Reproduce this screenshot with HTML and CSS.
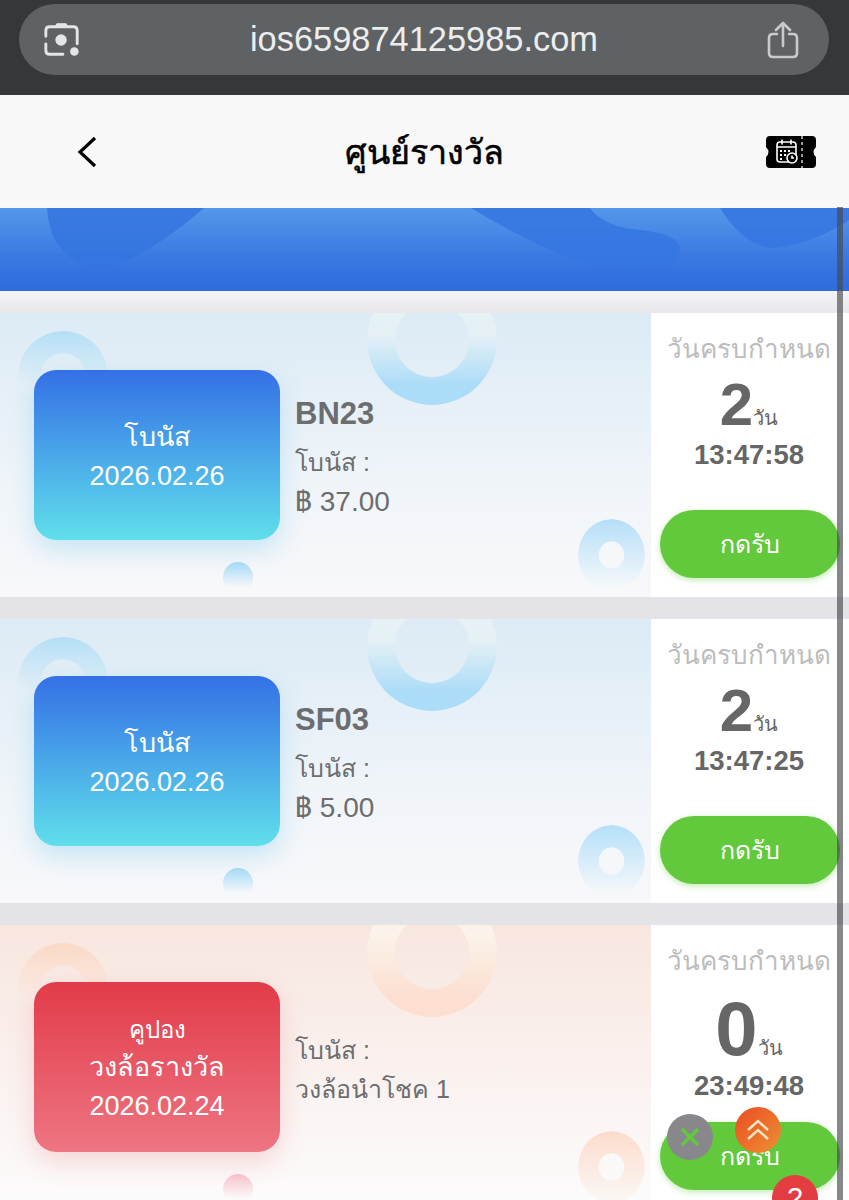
FILE: index.html
```html
<!DOCTYPE html>
<html lang="th">

<head>
    <meta charset="UTF-8">
    <meta name="viewport" content="width=device-width, initial-scale=1.0">
    <title>ศูนย์รางวัล</title>
    <link rel="stylesheet" href="styles.css">
</head>

<body>
    <div class="browser-bar">
        <div class="url-pill">
            <svg class="url-icon" viewBox="0 0 40 40" fill="none" stroke="#e4e5e7" stroke-width="3" stroke-linecap="round">
                <path d="M13 6l2-3h9l2 3z" fill="#e4e5e7" stroke-width="1.5"/>
                <path d="M3 16v-6q0-4 4-4h25q4 0 4 4v14"/>
                <path d="M3 24v7q0 4 4 4h14"/>
                <circle cx="19" cy="20" r="6" fill="#e4e5e7" stroke="none"/>
                <circle cx="33" cy="32" r="4.500" fill="#e4e5e7" stroke="none"/>
            </svg>
            <span class="url-text">ios659874125985.com</span>
            <svg class="share-icon" viewBox="0 0 32 38" fill="none" stroke="#c9cacc" stroke-width="2.600" stroke-linecap="round" stroke-linejoin="round">
                <path d="M10 13H6q-4 0-4 4v15q0 4 4 4h20q4 0 4-4V17q0-4-4-4h-4"/>
                <path d="M16 25V2M9 9l7-7 7 7"/>
            </svg>
        </div>
    </div>

    <header class="page-header">
        <svg class="back-icon" viewBox="0 0 20 32" fill="none" stroke="#000" stroke-width="3.200">
            <path d="M18 2L3 16l15 14"/>
        </svg>
        <h1>ศูนย์รางวัล</h1>
        <svg class="ticket-icon" viewBox="0 0 50 32">
            <path d="M4 0h42q4 0 4 4v7q-5 5 0 10v7q0 4-4 4H4q-4 0-4-4v-7q5-5 0-10V4q0-4 4-4z" fill="#000"/>
            <path d="M36 0v32" stroke="#fff" stroke-width="1.200" stroke-dasharray="3 3"/>
            <g fill="none" stroke="#fff" stroke-width="1.600">
                <rect x="11" y="6" width="19" height="20" rx="3"/>
                <path d="M11 11h19M16 3.500v5M25 3.500v5"/>
                <circle cx="26" cy="22" r="5" fill="#000"/>
                <path d="M26 19.500V22h2"/>
            </g>
            <path d="M14 14h2v2h-2zM18 14h2v2h-2zM22 14h2v2h-2zM14 18h2v2h-2zM18 18h2v2h-2zM14 22h2v2h-2z" fill="#fff"/>
        </svg>
    </header>

    <div class="banner">
        <svg class="banner-waves" viewBox="0 0 849 83" preserveAspectRatio="none">
            <path d="M47 0Q50 50 97 62Q140 55 204 0z" fill="#3575e0"/>
            <path d="M471 0H590Q604 19 640 22Q682 27 680 42Q678 60 640 62Q610 62 570 50Q520 30 471 0z" fill="#3576e2"/>
            <path d="M720 0Q745 40 775 40Q815 35 849 12V0z" fill="#3576e2"/>
        </svg>
    </div>

    <div class="top-gap"></div>

    <main class="list">
        <section class="card card-blue">
            <div class="card-body">
                <span class="ring ring-a"></span>
                <span class="ring ring-b"></span>
                <span class="ring ring-c"></span>
                <span class="ring dot"></span>
                <div class="badge">
                    <span>โบนัส</span>
                    <span>2026.02.26</span>
                </div>
                <div class="info">
                    <div class="code">BN23</div>
                    <div class="thai">โบนัส :</div>
                    <div>฿ 37.00</div>
                </div>
            </div>
            <aside class="side">
                <div class="due">วันครบกำหนด</div>
                <div class="days"><b>2</b><span>วัน</span></div>
                <div class="time">13:47:58</div>
                <button class="claim">กดรับ</button>
            </aside>
        </section>

        <section class="card card-blue">
            <div class="card-body">
                <span class="ring ring-a"></span>
                <span class="ring ring-b"></span>
                <span class="ring ring-c"></span>
                <span class="ring dot"></span>
                <div class="badge">
                    <span>โบนัส</span>
                    <span>2026.02.26</span>
                </div>
                <div class="info">
                    <div class="code">SF03</div>
                    <div class="thai">โบนัส :</div>
                    <div>฿ 5.00</div>
                </div>
            </div>
            <aside class="side">
                <div class="due">วันครบกำหนด</div>
                <div class="days"><b>2</b><span>วัน</span></div>
                <div class="time">13:47:25</div>
                <button class="claim">กดรับ</button>
            </aside>
        </section>

        <section class="card card-red">
            <div class="card-body">
                <span class="ring ring-a"></span>
                <span class="ring ring-b"></span>
                <span class="ring ring-c"></span>
                <span class="ring dot"></span>
                <div class="badge">
                    <span class="badge-small">คูปอง</span>
                    <span>วงล้อรางวัล</span>
                    <span>2026.02.24</span>
                </div>
                <div class="info">
                    <div class="thai">โบนัส :</div>
                    <div class="thai">วงล้อนำโชค 1</div>
                </div>
            </div>
            <aside class="side">
                <div class="due">วันครบกำหนด</div>
                <div class="days days-zero"><b>0</b><span>วัน</span></div>
                <div class="time">23:49:48</div>
                <button class="claim">กดรับ</button>
            </aside>
        </section>
    </main>

    <div class="scrollbar"></div>

    <div class="float float-close">
        <svg viewBox="0 0 24 24" fill="none" stroke="#62c83c" stroke-width="3.600">
            <path d="M4 4l16 16M20 4L4 20"/>
        </svg>
    </div>
    <div class="float float-up">
        <svg viewBox="0 0 24 24" fill="none" stroke="#fbe6c8" stroke-width="2.400">
            <path d="M2 12L12 3l10 9M2 21l10-9 10 9"/>
        </svg>
    </div>
    <div class="float float-count">2</div>
</body>

</html>
```

FILE: styles.css
```css
html,
body {
    margin: 0;
    height: 1200px;
    overflow: hidden;
}
body {
    position: relative;
    font-family: "Liberation Sans", "Noto Sans", sans-serif;
    background-color: #e3e3e8;
}

/* browser chrome */
.browser-bar {
    height: 95px;
    padding: 4px 20px 0 19px;
    box-sizing: border-box;
    background-color: #36373a;
}
.url-pill {
    height: 71px;
    padding: 0 30px 0 24px;
    display: flex;
    align-items: center;
    justify-content: space-between;
    border-radius: 36px;
    background-color: #5f6265;
}
.url-icon {
    width: 38px;
    height: 38px;
}
.url-text {
    font-size: 34.4px;
    color: #eceded;
}
.share-icon {
    width: 32px;
    height: 38px;
}

/* title bar */
.page-header {
    height: 113px;
    padding: 0 33px;
    display: grid;
    grid-template-columns: 1fr auto 1fr;
    align-items: center;
    background-color: #f8f8f8;
}
.page-header h1 {
    margin: 0;
    font-size: 34px;
    font-weight: normal;
    -webkit-text-stroke: 0.6px #000;
    color: #000;
}
.back-icon {
    width: 20px;
    height: 32px;
    margin-left: 44px;
}
.ticket-icon {
    width: 50px;
    height: 32px;
    justify-self: end;
}

.banner {
    height: 83px;
    background: linear-gradient(#5597e9, #3a78e2 60%, #2f6bdd);
}
.banner-waves {
    display: block;
    width: 100%;
    height: 100%;
    opacity: 0.85;
}
.top-gap {
    height: 22px;
    background: linear-gradient(#f4f4f6, #e8e8ec);
}

/* coupon cards */
.list {
    display: flex;
    flex-direction: column;
    gap: 22px;
}
.card {
    height: 284px;
    flex-shrink: 0;
    display: flex;
}
.card-body {
    position: relative;
    flex: 1;
    display: flex;
    align-items: center;
    gap: 15px;
    padding: 0 0 0 34px;
    overflow: hidden;
}
.card-blue .card-body {
    background: linear-gradient(#dcebf5, #f1f5f9 65%, #f8f8fa);
}
.card-red .card-body {
    background: linear-gradient(#f8e6df, #faf3f1 60%, #fcfcfc);
}

.ring {
    position: absolute;
    border-radius: 50%;
}
.ring-a {
    left: 18px;
    top: 18px;
    width: 90px;
    height: 90px;
    -webkit-mask: radial-gradient(closest-side, transparent 49%, #000 52%);
    mask: radial-gradient(closest-side, transparent 49%, #000 52%);
}
.ring-b {
    left: 367px;
    top: -38px;
    width: 130px;
    height: 130px;
    -webkit-mask: radial-gradient(closest-side, transparent 56%, #000 58%);
    mask: radial-gradient(closest-side, transparent 56%, #000 58%);
}
.ring-c {
    left: 578px;
    top: 206px;
    width: 67px;
    height: 72px;
    -webkit-mask: radial-gradient(closest-side, transparent 37%, #000 39%);
    mask: radial-gradient(closest-side, transparent 37%, #000 39%);
}
.dot {
    left: 223px;
    top: 249px;
    width: 30px;
    height: 30px;
}
.card-blue .ring-a {
    background: linear-gradient(#b3dff6, #e6f0f7 60%);
}
.card-blue .ring-b {
    background: linear-gradient(#e6f1f5 45%, #abdcf8 85%);
}
.card-blue .ring-c {
    background: linear-gradient(#b4dff8, #f6f8fa 95%);
}
.card-blue .dot {
    background: linear-gradient(#a7dbf7, rgba(247, 248, 250, 0) 85%);
}
.card-red .ring-a {
    background: linear-gradient(#fbd9c5, #f9ece7 60%);
}
.card-red .ring-b {
    background: linear-gradient(#fbf3ea 35%, #fcdfd0 85%);
}
.card-red .ring-c {
    background: linear-gradient(#fcdccb, #fbf8f7);
}
.card-red .dot {
    background: linear-gradient(#f7c4cc, rgba(252, 251, 251, 0) 85%);
}

.badge {
    position: relative;
    width: 246px;
    height: 170px;
    padding-top: 3px;
    box-sizing: border-box;
    flex-shrink: 0;
    display: flex;
    flex-direction: column;
    align-items: center;
    justify-content: center;
    border-radius: 22px;
    color: #fff;
    font-size: 27px;
    line-height: 39px;
}
.card-blue .badge {
    background: linear-gradient(#3470e6, #5fdfeb);
    box-shadow: 0 10px 26px rgba(90, 190, 235, 0.3);
}
.card-red .badge {
    background: linear-gradient(#e23b49, #ee7582);
    box-shadow: 0 10px 26px rgba(230, 90, 100, 0.22);
}
.badge-small {
    font-size: 24px;
    line-height: 36px;
}

.info {
    position: relative;
    padding-top: 4px;
    font-size: 28px;
    line-height: 39px;
    color: #6c6d6f;
}
.card-red .info {
    padding-top: 6px;
}
.thai {
    font-size: 25px;
}
.code {
    margin-bottom: 8px;
    font-size: 31px;
    font-weight: bold;
    line-height: 42px;
}

/* right column */
.side {
    width: 198px;
    flex-shrink: 0;
    display: flex;
    flex-direction: column;
    align-items: center;
    position: relative;
    background-color: #fff;
    color: #666;
    box-sizing: border-box;
    padding: 17px 2px 0 0;
}
.due {
    font-size: 26px;
    line-height: 38px;
    color: #bcbcbc;
    white-space: nowrap;
}
.days {
    height: 63px;
    display: flex;
    align-items: baseline;
    margin-top: 5px;
}
.days b {
    font-size: 60px;
    line-height: 64px;
}
.days span {
    font-size: 20px;
}
.days-zero {
    height: 82px;
}
.days-zero b {
    font-size: 76px;
    line-height: 88px;
}
.time {
    font-size: 27.500px;
    font-weight: bold;
    line-height: 38px;
}
.claim {
    position: absolute;
    left: 9px;
    top: 197px;
    width: 180px;
    height: 68px;
    border: none;
    border-radius: 34px;
    background-color: #62c83c;
    box-shadow: 0 2px 6px rgba(98, 200, 60, 0.4);
    color: #fff;
    font-family: inherit;
    font-size: 25px;
}

/* overlays */
.scrollbar {
    position: absolute;
    left: 837px;
    top: 207px;
    bottom: 0;
    width: 6px;
    background-color: rgba(70, 70, 75, 0.65);
}
.float {
    position: absolute;
    width: 46px;
    height: 46px;
    border-radius: 50%;
    display: flex;
    align-items: center;
    justify-content: center;
}
.float svg {
    width: 24px;
    height: 24px;
}
.float-close {
    left: 667px;
    top: 1114px;
    background-color: #88888c;
}
.float-up {
    left: 735px;
    top: 1107px;
    background: linear-gradient(135deg, #e84d22, #ee9033);
}
.float-count {
    left: 772px;
    top: 1175px;
    background: linear-gradient(#e63e3e, #dd3a48);
    color: #fff;
    font-size: 30px;
}
```
